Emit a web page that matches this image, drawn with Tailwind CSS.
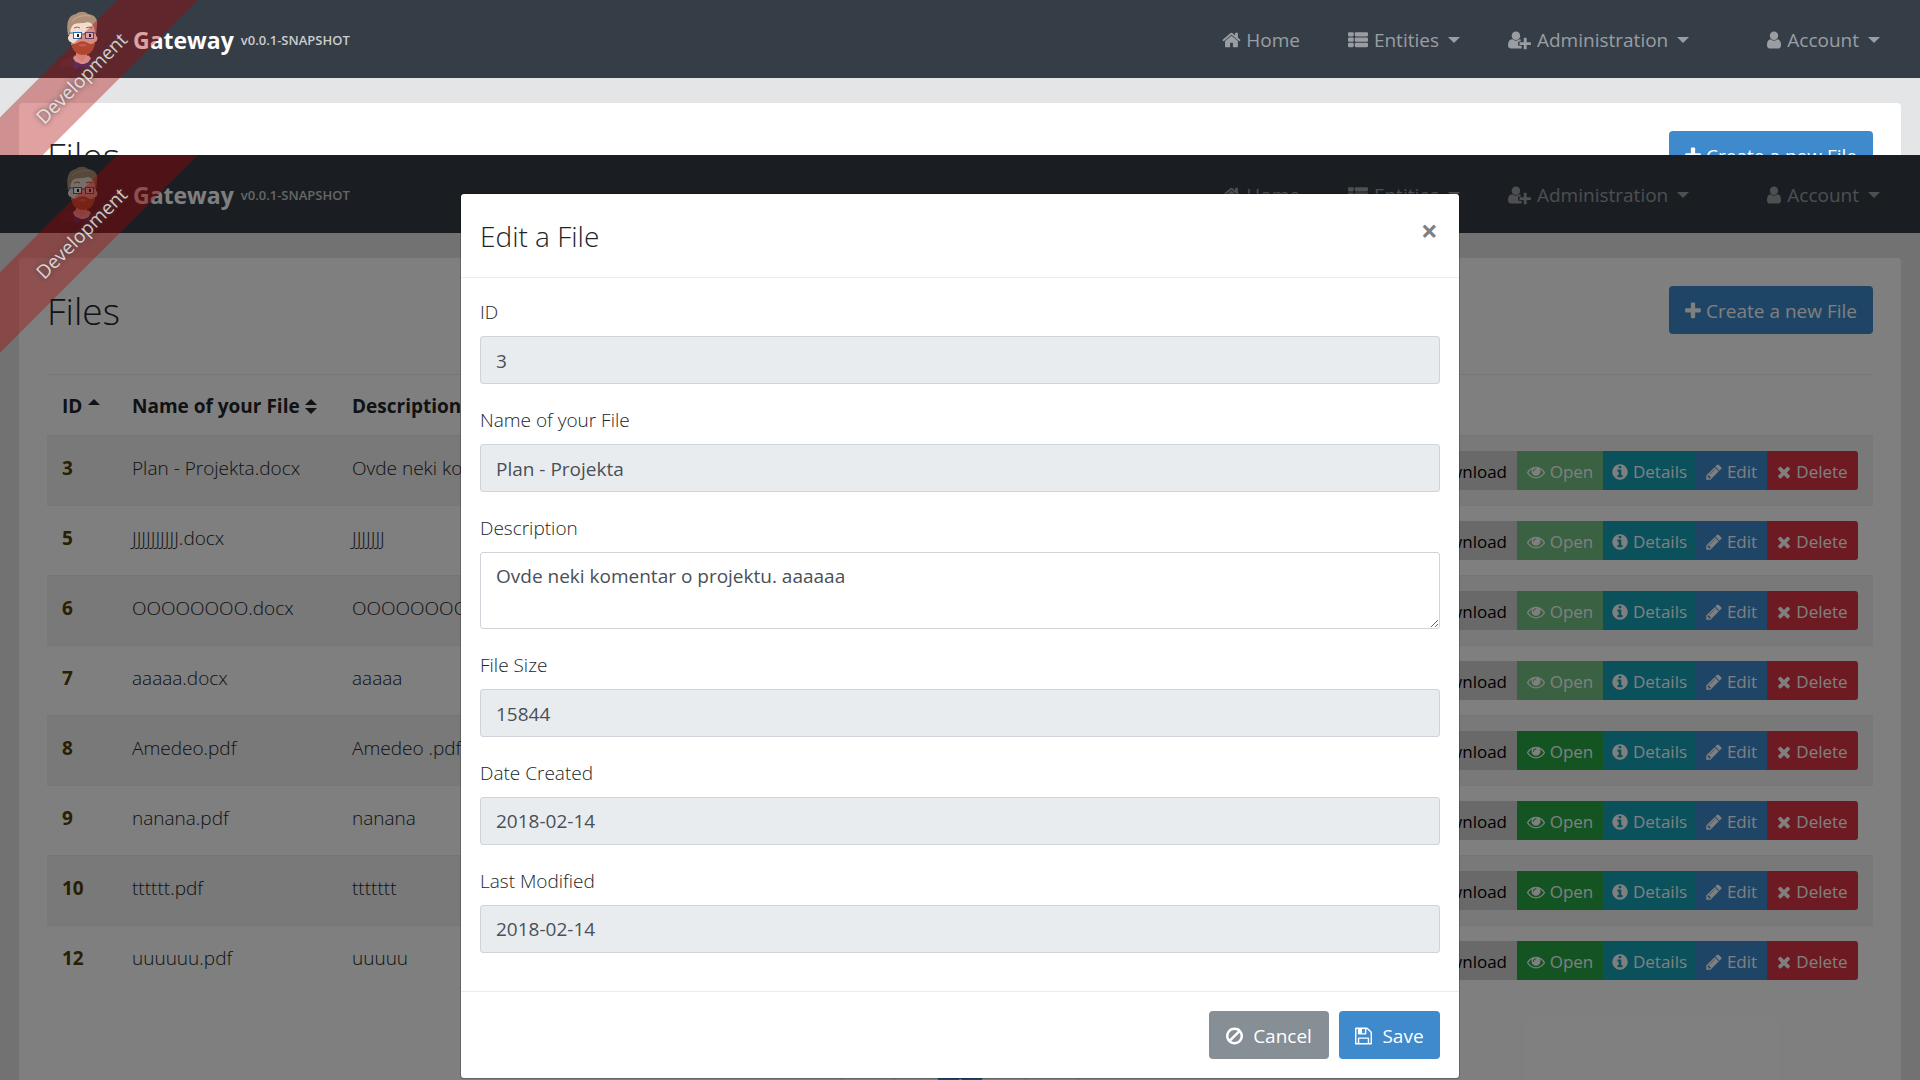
<!DOCTYPE html>
<html lang="en">
<head>
<meta charset="utf-8">
<title>Files</title>
<script src="https://cdn.jsdelivr.net/npm/@tailwindcss/browser@4"></script>
</head>
<body class="bg-[#e4e5e6] font-['Open_Sans',sans-serif] text-[19px] leading-[30px] text-[#212529]">

<!-- Icon sprite -->
<svg class="hidden" aria-hidden="true">
  <symbol id="home" viewBox="64 0 1664 1792"><path d="M1472 992v480q0 26-19 45t-45 19h-384v-384h-256v384h-384q-26 0-45-19t-19-45v-480q0-1 .5-3t.5-3l575-474 575 474q1 2 1 6zm223-69l-62 74q-8 9-21 11h-3q-13 0-21-7l-692-577-692 577q-12 8-24 7-13-2-21-11l-62-74q-8-10-7-23.5t11-21.5l719-599q32-26 76-26t76 26l244 204v-195q0-14 9-23t23-9h192q14 0 23 9t9 23v408l219 182q10 8 11 21.5t-7 23.5z"/></symbol>
  <symbol id="list" viewBox="0 0 1792 1792"><rect x="0" y="192" width="512" height="384" rx="96"/><rect x="608" y="192" width="1184" height="384" rx="96"/><rect x="0" y="672" width="512" height="384" rx="96"/><rect x="608" y="672" width="1184" height="384" rx="96"/><rect x="0" y="1152" width="512" height="384" rx="96"/><rect x="608" y="1152" width="1184" height="384" rx="96"/></symbol>
  <symbol id="user" viewBox="256 0 1280 1792"><path d="M1536 1399q0 109-62.5 187t-150.5 78h-854q-88 0-150.5-78t-62.5-187q0-85 8.5-160.5t31.5-152 58.5-131 94-89 134.5-34.5q131 128 313 128t313-128q76 0 134.5 34.5t94 89 58.5 131 31.5 152 8.5 160.5zm-256-887q0 159-112.5 271.5t-271.5 112.5-271.5-112.5-112.5-271.5 112.5-271.5 271.5-112.5 271.5 112.5 112.5 271.5z"/></symbol>
  <symbol id="userplus" viewBox="0 0 2048 1792"><circle cx="704" cy="512" r="384"/><path d="M391 832q131 128 313 128t313-128q60 0 110 22v170H960q-64 0-64 64v256q0 64 64 64h256v240q-30 16-70 16H280Q0 1664 0 1399C0 1100 80 832 391 832z"/><path d="M1664 1088h352q32 0 32 32v192q0 32-32 32h-352v352q0 32-32 32h-192q-32 0-32-32v-352h-352q-32 0-32-32v-192q0-32 32-32h352V736q0-32 32-32h192q32 0 32 32z"/></symbol>
  <symbol id="plus" viewBox="192 0 1408 1792"><path d="M1600 736v192q0 40-28 68t-68 28h-416v416q0 40-28 68t-68 28h-192q-40 0-68-28t-28-68v-416h-416q-40 0-68-28t-28-68v-192q0-40 28-68t68-28h416v-416q0-40 28-68t68-28h192q40 0 68 28t28 68v416h416q40 0 68 28t28 68z"/></symbol>
  <symbol id="eye" viewBox="0 0 1792 1792"><path d="M1664 960q-152-236-381-353 61 104 61 225 0 185-131.5 316.5t-316.5 131.5-316.5-131.5-131.5-316.5q0-121 61-225-229 117-381 353 133 205 333.5 326.5t434.5 121.5 434.5-121.5 333.5-326.5zm-720-384q0-20-14-34t-34-14q-125 0-214.5 89.5t-89.5 214.5q0 20 14 34t34 14 34-14 14-34q0-86 61-147t147-61q20 0 34-14t14-34zm848 384q0 34-20 69-140 230-376.5 368.5t-499.5 138.5-499.5-139-376.5-368q-20-35-20-69t20-69q140-229 376.5-368t499.5-139 499.5 139 376.5 368q20 35 20 69z"/></symbol>
  <symbol id="info" viewBox="128 0 1536 1792"><path d="M1152 1376v-160q0-14-9-23t-23-9h-96v-512q0-14-9-23t-23-9h-320q-14 0-23 9t-9 23v160q0 14 9 23t23 9h96v320h-96q-14 0-23 9t-9 23v160q0 14 9 23t23 9h448q14 0 23-9t9-23zm-128-896v-160q0-14-9-23t-23-9h-192q-14 0-23 9t-9 23v160q0 14 9 23t23 9h192q14 0 23-9t9-23zm640 416q0 209-103 385.5t-279.5 279.5-385.5 103-385.5-103-279.5-279.5-103-385.5 103-385.5 279.5-279.5 385.5-103 385.5 103 279.5 279.5 103 385.5z"/></symbol>
  <symbol id="pencil" viewBox="128 0 1536 1792"><path d="M491 1536l91-91-235-235-91 91v107h128v128h107zm523-928q0-22-22-22-10 0-17 7l-542 542q-7 7-7 17 0 22 22 22 10 0 17-7l542-542q7-7 7-17zm-54-192l416 416-832 832h-416v-416zm683 96q0 53-37 90l-166 166-416-416 166-165q36-38 90-38 53 0 91 38l235 234q37 39 37 91z"/></symbol>
  <symbol id="times" viewBox="192 0 1408 1792"><path d="M1490 1322q0 40-28 68l-136 136q-28 28-68 28t-68-28l-294-294-294 294q-28 28-68 28t-68-28l-136-136q-28-28-28-68t28-68l294-294-294-294q-28-28-28-68t28-68l136-136q28-28 68-28t68 28l294 294 294-294q28-28 68-28t68 28l136 136q28 28 28 68t-28 68l-294 294 294 294q28 28 28 68z"/></symbol>
  <symbol id="ban" viewBox="128 0 1536 1792"><path d="M1440 893q0-161-87-295l-754 753q137 89 297 89 111 0 211.5-43.5t173.5-116.5 116-174.5 43-212.5zm-999 299l755-754q-135-91-300-91-148 0-273 73t-198 199-73 274q0 162 89 299zm1223-299q0 157-61 300t-163.5 246-245 164-298.5 61-298.5-61-245-164-163.5-246-61-300 61-299.5 163.5-245.5 245-164 298.5-61 298.5 61 245 164 163.5 245.5 61 299.5z"/></symbol>
  <symbol id="floppy" viewBox="128 0 1536 1792"><path d="M512 1536h768v-384h-768v384zm896 0h128v-896q0-14-10-38.5t-20-34.5l-281-281q-10-10-34-20t-39-10v416q0 40-28 68t-68 28h-576q-40 0-68-28t-28-68v-416h-128v1280h128v-416q0-40 28-68t68-28h832q40 0 68 28t28 68v416zm-384-928v-320q0-13-9.5-22.5t-22.5-9.5h-192q-13 0-22.5 9.5t-9.5 22.5v320q0 13 9.5 22.5t22.5 9.5h192q13 0 22.5-9.5t9.5-22.5zm640 32v928q0 40-28 68t-68 28h-1344q-40 0-68-28t-28-68v-1344q0-40 28-68t68-28h928q40 0 88 20t76 48l280 280q28 28 48 76t20 88z"/></symbol>
  <symbol id="avatar" viewBox="0 0 38 58">
    <path d="M0 56c0-8 5-9 13-11l6-2 6 2c8 2 13 3 13 11z" fill="#463f4d"/>
    <path d="M15 38h11v8l-5 6-6-6z" fill="#f0c9bb"/>
    <path d="M14 44l7 7 6-7 3 3-5 8h-8l-5-8z" fill="#f6dcd4"/>
    <path d="M8 18C8 9 13 7 22 7s13 3 13 12v6c2 0 2 6-1 6-1 7-6 13-12 13S11 38 10 31c-3 0-4-6-2-6z" fill="#f3dccf"/>
    <path d="M7 24C5 12 7 4 15 3c3-3 9-3 12 0 7 1 10 5 9 11l-1 10-2-7c-1-4-3-5-6-6-6 2-11 0-15 3-2 2-3 6-3 10z" fill="#ae9078"/>
    <path d="M11 10c5-5 12-6 18-5" fill="none" stroke="#c8ab90"/>
    <path d="M10 31c3 3 5 2 8 0 2-1 5-1 7 0 3 2 6 3 9 0-1 8-4 13-12 13-7 0-11-5-12-13z" fill="#b5714d"/>
    <path d="M17 34q5-2 9 0-4 3-9 0z" fill="#d99488"/>
    <path d="M13 17q4-2 6 0M25 17q3-2 6 0" fill="none" stroke="#8a654e"/>
    <rect x="12.500" y="21.500" width="8" height="6" fill="#fff" stroke="#2a6cab"/>
    <rect x="24.500" y="21.500" width="8" height="6" fill="#fff" stroke="#2a6cab"/>
    <path d="M8 22h4M20 23h4M33 22h2" stroke="#2a6cab"/>
    <path d="M16 23h2v3h-2zM28 23h2v3h-2z" fill="#222"/>
    <path d="M13 50l7 3h3l8-3v8l-8-2h-3l-7 2z" fill="#35458a"/>
  </symbol>
</svg>

<!-- Page behind the dialog; mounted once per pane -->
<template id="page">
  <header class="flex h-[78px] items-center bg-[#353d47] pt-[2px] pr-[40px] pl-[61px] text-white/50">
    <a href="#" class="flex items-center text-white">
      <svg class="h-[58px] w-[38px]"><use href="#avatar"/></svg>
      <span class="ml-[34px] text-[23px] font-bold">Gateway</span>
      <span class="ml-[7px] text-[13px] font-semibold text-[#ccc]">v0.0.1-SNAPSHOT</span>
    </a>
    <nav class="ml-auto flex items-center">
      <a href="#" class="flex items-center gap-[5px]"><svg class="h-5 w-[19px] fill-current"><use href="#home"/></svg>Home</a>
      <a href="#" class="ml-[48px] flex items-center gap-[6px]"><svg class="h-5 w-5 fill-current"><use href="#list"/></svg>Entities<span class="ml-[3px] border-x-[6px] border-t-[6px] border-x-transparent"></span></a>
      <a href="#" class="ml-[48px] flex items-center gap-[6px]"><svg class="h-5 w-[23px] fill-current"><use href="#userplus"/></svg>Administration<span class="ml-[3px] border-x-[6px] border-t-[6px] border-x-transparent"></span></a>
      <a href="#" class="ml-[78px] flex items-center gap-[6px]"><svg class="h-5 w-[14px] fill-current"><use href="#user"/></svg>Account<span class="ml-[3px] border-x-[6px] border-t-[6px] border-x-transparent"></span></a>
    </nav>
  </header>
  <main class="mx-[19px] mt-[25px] rounded-t-[4px] bg-white px-7 pt-7 pb-16">
    <div class="flex items-start justify-between">
      <h2 class="text-[37px] leading-[50px] font-light">Files</h2>
      <a href="#" class="flex h-12 items-center gap-[5px] rounded-[4px] bg-[#3e8acc] px-4 pt-[2px] text-white"><svg class="h-5 w-4 fill-current"><use href="#plus"/></svg>Create a new File</a>
    </div>
    <table class="mt-[38px] w-full table-fixed border-collapse text-left">
      <thead>
        <tr class="h-[61px] border-t border-[#e9ecef] align-middle">
          <th class="w-[70px] pt-[2px] pl-[15px]"><span class="flex items-center gap-[6px]">ID<span class="-mt-2 border-x-[6px] border-b-[6px] border-x-transparent"></span></span></th>
          <th class="w-[220px] pt-[2px] pl-[15px]"><span class="flex items-center gap-[5px]">Name of your File<span class="flex flex-col gap-[3px]"><span class="border-x-[6px] border-b-[6px] border-x-transparent"></span><span class="border-x-[6px] border-t-[6px] border-x-transparent"></span></span></span></th>
          <th class="pt-[2px] pl-[15px]">Description</th>
          <th class="w-[520px]"></th>
        </tr>
      </thead>
      <tbody></tbody>
    </table>
    <ul class="mt-[66px] flex justify-center leading-[46px] text-[#3e8acc]">
      <li class="w-[54px] border border-[#ddd] text-center">««</li>
      <li class="w-[43px] border-y border-[#ddd] text-center">«</li>
      <li class="w-[44px] bg-[#3e8acc] text-center text-white">1</li>
      <li class="w-[43px] border-y border-[#ddd] text-center">»</li>
      <li class="w-[54px] border border-[#ddd] text-center">»»</li>
    </ul>
  </main>
  <div class="pointer-events-none absolute top-[50px] -left-[71px] z-20 flex h-[57px] w-[300px] -rotate-45 items-center justify-center bg-[#aa0000]/37">
    <a href="#" class="pt-[2px] pl-1 text-white/75 [text-shadow:0_0_5px_#444]">Development</a>
  </div>
</template>

<div class="flex h-screen flex-col overflow-hidden">
  <section data-pane class="relative h-[155px] shrink-0 overflow-hidden"></section>

  <div class="relative flex-1 overflow-hidden">
    <section data-pane></section>
    <div class="absolute inset-0 z-10 bg-black/50"></div>

    <div role="dialog" aria-labelledby="dlg" class="absolute inset-x-0 top-[38px] z-30 mx-auto w-[1000px] max-w-full rounded-[4px] border border-black/20 bg-white bg-clip-padding">
      <form>
        <div class="flex h-[84px] items-start justify-between border-b border-[#e9ecef] px-[19px] pt-[19px]">
          <h4 id="dlg" class="text-[28px] leading-[46px] font-light">Edit a File</h4>
          <button type="button" aria-label="Close" class="pr-[2px] text-[30px] leading-[36px] font-bold text-black/50">×</button>
        </div>
        <div class="flex flex-col gap-[21px] px-[19px] pt-[19px] pb-[38px]">
          <div><label for="f1" class="mb-[9px] block font-light">ID</label><input id="f1" readonly value="3" class="block h-12 w-full rounded-[3px] border border-[#ced4da] bg-[#e9ecef] px-[15px] pt-[2px] text-[#495057]"></div>
          <div><label for="f2" class="mb-[9px] block font-light">Name of your File</label><input id="f2" readonly value="Plan - Projekta" class="block h-12 w-full rounded-[3px] border border-[#ced4da] bg-[#e9ecef] px-[15px] pt-[2px] text-[#495057]"></div>
          <div><label for="f3" class="mb-[9px] block font-light">Description</label><textarea id="f3" class="block h-[77px] w-full rounded-[3px] border border-[#ced4da] bg-white px-[15px] py-[8px] text-[#495057]">Ovde neki komentar o projektu. aaaaaa</textarea></div>
          <div><label for="f4" class="mb-[9px] block font-light">File Size</label><input id="f4" readonly value="15844" class="block h-12 w-full rounded-[3px] border border-[#ced4da] bg-[#e9ecef] px-[15px] pt-[2px] text-[#495057]"></div>
          <div><label for="f5" class="mb-[9px] block font-light">Date Created</label><input id="f5" readonly value="2018-02-14" class="block h-12 w-full rounded-[3px] border border-[#ced4da] bg-[#e9ecef] px-[15px] text-[#495057]"></div>
          <div><label for="f6" class="mb-[9px] block font-light">Last Modified</label><input id="f6" readonly value="2018-02-14" class="block h-12 w-full rounded-[3px] border border-[#ced4da] bg-[#e9ecef] px-[15px] text-[#495057]"></div>
        </div>
        <div class="flex justify-end gap-[10px] border-t border-[#e9ecef] px-[19px] py-[19px] text-white">
          <button type="button" class="flex h-12 w-[120px] items-center justify-center gap-[10px] rounded-[4px] bg-[#868e96] pt-[2px]"><svg class="h-5 w-[17px] fill-current"><use href="#ban"/></svg>Cancel</button>
          <button type="submit" class="flex h-12 w-[101px] items-center justify-center gap-[10px] rounded-[4px] bg-[#3e8acc] pt-[2px]"><svg class="h-5 w-[17px] fill-current"><use href="#floppy"/></svg>Save</button>
        </div>
      </form>
    </div>
  </div>
</div>

<script>
const files = [
  [3, 'Plan - Projekta.docx', 'Ovde neki komentar', 0],
  [5, 'JJJJJJJJJJ.docx', 'JJJJJJJ', 0],
  [6, 'OOOOOOOO.docx', 'OOOOOOOO', 0],
  [7, 'aaaaa.docx', 'aaaaa', 0],
  [8, 'Amedeo.pdf', 'Amedeo .pdf', 1],
  [9, 'nanana.pdf', 'nanana', 1],
  [10, 'tttttt.pdf', 'ttttttt', 1],
  [12, 'uuuuuu.pdf', 'uuuuu', 1]
];
const rows = files.map(([id, name, desc, open]) => `
  <tr class="h-[70px] border-t border-[#e9ecef] align-top font-light odd:bg-black/5">
    <td class="pt-[17px] pl-[15px]"><a href="#" class="font-bold text-[#533f03]">${id}</a></td>
    <td class="pt-[17px] pl-[15px]">${name}</td>
    <td class="pt-[17px] pl-[15px]">${desc}</td>
    <td class="pt-[15px] pr-[15px]">
      <div class="flex h-[39px] justify-end text-[17px] font-normal text-white">
        <button class="w-[118px] bg-[#d3d3d3] pt-[2px] pr-[10px] text-right text-black">Download</button>
        <button class="flex w-[86px] items-center justify-center gap-[5px] pt-[2px] ${open ? 'bg-[#28a745]' : 'bg-[#74c285]'}"><svg class="h-[18px] w-[18px] fill-current"><use href="#eye"/></svg>Open</button>
        <button class="flex w-[93px] items-center justify-center gap-[5px] bg-[#17a2b8] pt-[2px]"><svg class="h-[18px] w-4 fill-current"><use href="#info"/></svg>Details</button>
        <button class="flex w-[71px] items-center justify-center gap-[5px] bg-[#3e8acc] pt-[2px]"><svg class="h-[18px] w-4 fill-current"><use href="#pencil"/></svg>Edit</button>
        <button class="flex w-[91px] items-center justify-center gap-[5px] rounded-r-[3px] bg-[#dc3545] pt-[2px]"><svg class="h-[18px] w-[14px] fill-current"><use href="#times"/></svg>Delete</button>
      </div>
    </td>
  </tr>`).join('');
document.querySelectorAll('[data-pane]').forEach(pane => {
  pane.append(document.getElementById('page').content.cloneNode(true));
  pane.querySelector('tbody').innerHTML = rows;
});
</script>
</body>
</html>
